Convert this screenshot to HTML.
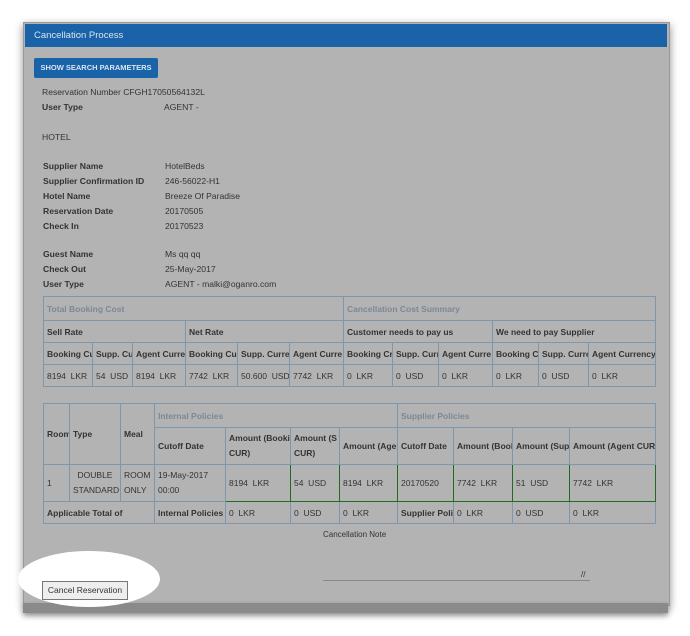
<!DOCTYPE html>
<html><head><style>
body{margin:0;width:690px;height:636px;background:#fff;position:relative;overflow:hidden;font-family:"Liberation Sans",sans-serif;font-size:8.6px;color:#333}
.panel{position:absolute;left:23px;top:22px;width:645px;height:582px;background:#b3b3b3;box-shadow:0 3px 8px rgba(0,0,0,.45);border:1px solid #9a9a9a}
.bottom{position:absolute;left:23px;top:603px;width:645px;height:10px;background:#8a8a8a;box-shadow:0 3px 6px rgba(0,0,0,.4)}
.hdr{position:absolute;left:25px;top:24px;width:642px;height:23px;background:#1a63a8;color:#d8e4f0;font-size:9.5px;line-height:23px;padding-left:9px;box-sizing:border-box}
.btn{position:absolute;left:34px;top:58px;width:124px;height:20px;background:#1a63a8;color:#d8e4f0;font-size:7.5px;font-weight:bold;line-height:20px;text-align:center;border-radius:2px}
.t{position:absolute;white-space:nowrap}
.b{font-weight:bold}
table{position:absolute;border-collapse:collapse;table-layout:fixed}
td{border:1px solid #7f97ad;padding:0 3px;overflow:hidden;white-space:nowrap;height:20px;font-size:8.5px}
.h{color:#7b8896;font-weight:bold}
.b2{font-weight:bold}
.g td.gr{border-color:#1f6b1f}
.ell{position:absolute;left:18px;top:551px;width:142px;height:56px;border-radius:50%;background:#fff}
</style></head><body>
<div class="panel"></div>
<div class="bottom"></div>
<div class="hdr">Cancellation Process</div>
<div class="btn">SHOW SEARCH PARAMETERS</div>
<div class="t" style="left:42px;top:87px">Reservation Number CFGH17050564132L</div>
<div class="t b" style="left:42px;top:102px">User Type</div><div class="t" style="left:164px;top:102px">AGENT -</div>
<div class="t" style="left:42px;top:132px">HOTEL</div>
<div class="t b" style="left:43px;top:161px">Supplier Name</div><div class="t" style="left:165px;top:161px">HotelBeds</div>
<div class="t b" style="left:43px;top:176px">Supplier Confirmation ID</div><div class="t" style="left:165px;top:176px">246-56022-H1</div>
<div class="t b" style="left:43px;top:191px">Hotel Name</div><div class="t" style="left:165px;top:191px">Breeze Of Paradise</div>
<div class="t b" style="left:43px;top:206px">Reservation Date</div><div class="t" style="left:165px;top:206px">20170505</div>
<div class="t b" style="left:43px;top:221px">Check In</div><div class="t" style="left:165px;top:221px">20170523</div>
<div class="t b" style="left:43px;top:249px">Guest Name</div><div class="t" style="left:165px;top:249px">Ms qq qq</div>
<div class="t b" style="left:43px;top:264px">Check Out</div><div class="t" style="left:165px;top:264px">25-May-2017</div>
<div class="t b" style="left:43px;top:279px">User Type</div><div class="t" style="left:165px;top:279px">AGENT - malki@oganro.com</div>

<table style="left:43px;top:296px;width:612px">
<colgroup><col style="width:49px"><col style="width:40px"><col style="width:53px"><col style="width:52px"><col style="width:52px"><col style="width:54px"><col style="width:49px"><col style="width:46px"><col style="width:54px"><col style="width:46px"><col style="width:50px"><col style="width:67px"></colgroup>
<tr style="height:24px"><td colspan="6" class="h">Total Booking Cost</td><td colspan="6" class="h">Cancellation Cost Summary</td></tr>
<tr style="height:22px"><td colspan="3" class="b2">Sell Rate</td><td colspan="3" class="b2">Net Rate</td><td colspan="3" class="b2">Customer needs to pay us</td><td colspan="3" class="b2">We need to pay Supplier</td></tr>
<tr style="height:22px"><td class="b2">Booking Cu</td><td class="b2">Supp. Cu</td><td class="b2">Agent Curre</td><td class="b2">Booking Cu</td><td class="b2">Supp. Curren</td><td class="b2">Agent Curre</td><td class="b2">Booking Cr</td><td class="b2">Supp. Curr</td><td class="b2">Agent Curre</td><td class="b2">Booking C</td><td class="b2">Supp. Curre</td><td class="b2">Agent Currency</td></tr>
<tr style="height:22px"><td>8194&nbsp; LKR</td><td>54&nbsp; USD</td><td>8194&nbsp; LKR</td><td>7742&nbsp; LKR</td><td>50.600&nbsp; USD</td><td>7742&nbsp; LKR</td><td>0&nbsp; LKR</td><td>0&nbsp; USD</td><td>0&nbsp; LKR</td><td>0&nbsp; LKR</td><td>0&nbsp; USD</td><td>0&nbsp; LKR</td></tr>
</table>

<table style="left:43px;top:403px;width:612px">
<colgroup><col style="width:26px"><col style="width:51px"><col style="width:34px"><col style="width:71px"><col style="width:65px"><col style="width:49px"><col style="width:58px"><col style="width:56px"><col style="width:59px"><col style="width:57px"><col style="width:86px"></colgroup>
<tr style="height:24px"><td rowspan="2" class="b2">Room</td><td rowspan="2" class="b2">Type</td><td rowspan="2" class="b2">Meal</td><td colspan="4" class="h">Internal Policies</td><td colspan="4" class="h">Supplier Policies</td></tr>
<tr style="height:37px"><td class="b2">Cutoff Date</td><td class="b2" style="line-height:15px">Amount (Bookir<br>CUR)</td><td class="b2" style="line-height:15px">Amount (S<br>CUR)</td><td class="b2">Amount (Agei</td><td class="b2">Cutoff Date</td><td class="b2">Amount (Book</td><td class="b2">Amount (Sup</td><td class="b2">Amount (Agent CUR)</td></tr>
<tr class="g" style="height:37px;line-height:15px"><td>1</td><td style="text-align:center">DOUBLE<br>STANDARD</td><td>ROOM<br>ONLY</td><td>19-May-2017<br>00:00</td><td class="gr">8194&nbsp; LKR</td><td class="gr">54&nbsp; USD</td><td class="gr">8194&nbsp; LKR</td><td class="gr">20170520</td><td class="gr">7742&nbsp; LKR</td><td class="gr">51&nbsp; USD</td><td class="gr">7742&nbsp; LKR</td></tr>
<tr style="height:22px"><td colspan="3" class="b2">Applicable Total of</td><td class="b2">Internal Policies</td><td>0&nbsp; LKR</td><td>0&nbsp; USD</td><td>0&nbsp; LKR</td><td class="b2">Supplier Polic</td><td>0&nbsp; LKR</td><td>0&nbsp; USD</td><td>0&nbsp; LKR</td></tr>
</table>

<div class="t" style="left:323px;top:530px;font-size:8px">Cancellation Note</div>
<div style="position:absolute;left:323px;top:580px;width:267px;border-top:1px solid #888"></div>
<div class="t" style="left:581px;top:570px;font-size:8px">//</div>
<div class="ell"></div>
<div style="position:absolute;left:42px;top:581px;width:84px;height:17px;border:1px solid #777;background:#eee;font-size:8.5px;line-height:17px;text-align:center">Cancel Reservation</div>
</body></html>
